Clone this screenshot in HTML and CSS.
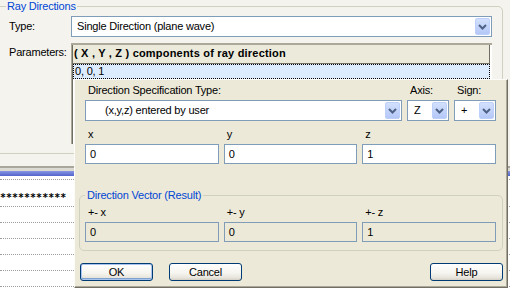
FILE: index.html
```html
<html><head>
  <meta charset="UTF-8">
  <meta name="viewport" content="width=device-width, initial-scale=1.0">
  <title>Ray Directions</title>
  <link rel="stylesheet" href="styles.css">
</head>
<body>
  <div class="panel">
    <fieldset class="group ray-group">
      <legend>Ray Directions</legend>
      <div class="field-row">
        <span class="field-label">Type:</span>
        <div class="combo">
          <span class="combo-text">Single Direction (plane wave)</span>
          <span class="combo-btn"><svg width="9" height="6" viewBox="0 0 9 6"><polyline points="1,1 4.5,4.5 8,1" fill="none" stroke="#4d6185" stroke-width="2"/></svg></span>
        </div>
      </div>
      <div class="field-row top">
        <span class="field-label">Parameters:</span>
        <div class="grid">
          <div class="grid-head">( X , Y , Z ) components of ray direction</div>
          <div class="grid-row selected">0, 0, 1</div>
        </div>
      </div>
    </fieldset>
    <div class="list">
      <div class="list-bar"></div>
      <div class="list-row first"></div>
      <div class="list-row stars">***********</div>
      <div class="list-row"></div>
      <div class="list-row"></div>
      <div class="list-row"></div>
      <div class="list-row"></div>
      <div class="list-row"></div>
    </div>
  </div>

  <div class="popup">
    <div class="spec-row">
      <div class="cell">
        <span class="lbl">Direction Specification Type:</span>
        <div class="combo">
          <span class="combo-text indent">(x,y,z) entered by user</span>
          <span class="combo-btn"><svg width="9" height="6" viewBox="0 0 9 6"><polyline points="1,1 4.5,4.5 8,1" fill="none" stroke="#4d6185" stroke-width="2"/></svg></span>
        </div>
      </div>
      <div class="cell">
        <span class="lbl">Axis:</span>
        <div class="combo">
          <span class="combo-text small">Z</span>
          <span class="combo-btn"><svg width="9" height="6" viewBox="0 0 9 6"><polyline points="1,1 4.5,4.5 8,1" fill="none" stroke="#4d6185" stroke-width="2"/></svg></span>
        </div>
      </div>
      <div class="cell">
        <span class="lbl">Sign:</span>
        <div class="combo">
          <span class="combo-text small">+</span>
          <span class="combo-btn"><svg width="9" height="6" viewBox="0 0 9 6"><polyline points="1,1 4.5,4.5 8,1" fill="none" stroke="#4d6185" stroke-width="2"/></svg></span>
        </div>
      </div>
    </div>

    <div class="xyz-row">
      <div class="cell">
        <span class="lbl">x</span>
        <div class="input">0</div>
      </div>
      <div class="cell">
        <span class="lbl">y</span>
        <div class="input">0</div>
      </div>
      <div class="cell">
        <span class="lbl">z</span>
        <div class="input">1</div>
      </div>
    </div>

    <fieldset class="group result-group">
      <legend>Direction Vector (Result)</legend>
      <div class="xyz-row inner">
        <div class="cell">
          <span class="lbl">+- x</span>
          <div class="input readonly">0</div>
        </div>
        <div class="cell">
          <span class="lbl">+- y</span>
          <div class="input readonly">0</div>
        </div>
        <div class="cell">
          <span class="lbl">+- z</span>
          <div class="input readonly">1</div>
        </div>
      </div>
    </fieldset>

    <div class="buttons">
      <button class="btn default">OK</button>
      <button class="btn">Cancel</button>
      <span class="spacer"></span>
      <button class="btn">Help</button>
    </div>
  </div>
</body>
</html>
```

FILE: styles.css
```css
body, html {
  margin: 0;
  padding: 0;
  width: 510px;
  height: 290px;
  overflow: hidden;
  background-color: #fff;
  font-family: 'Liberation Sans', Arial, sans-serif;
  font-size: 11px;
  letter-spacing: -0.2px;
  color: #000;
}
.panel {
  background-color: #f4f3ee;
  position: relative;
}
.group {
  margin: 0;
  min-width: 0;
  border: 1px solid #d0d0bf;
  border-radius: 5px;
}
.group legend {
  color: #0046d5;
  line-height: 12px;
  padding: 0 1px;
}
.ray-group {
  margin-left: -5px;
  width: 508px;
  box-sizing: border-box;
  padding: 4px 10px 9px 13px;
}
.ray-group legend {
  margin-left: -3px;
}
.field-row {
  display: flex;
  align-items: center;
}
.field-row.top {
  align-items: flex-start;
  margin-top: 6px;
}
.field-label {
  width: 62px;
  flex: none;
  line-height: 13px;
}
.field-row.top .field-label {
  padding-top: 3px;
}
.combo {
  flex: 1;
  display: flex;
  align-items: stretch;
  height: 21px;
  box-sizing: border-box;
  border: 1px solid #7f9db9;
  background-color: #fff;
  padding: 1px;
}
.combo-text {
  flex: 1;
  line-height: 17px;
  padding-left: 4px;
  white-space: nowrap;
  overflow: hidden;
}
.combo-text.indent {
  padding-left: 18px;
}
.combo-text.small {
  padding-left: 5px;
}
.combo-btn {
  width: 15px;
  flex: none;
  box-sizing: border-box;
  border: 1px solid #bdd0fb;
  border-radius: 2px;
  background: linear-gradient(#d3e0fd, #b4c8f7);
  display: flex;
  align-items: center;
  justify-content: center;
}
.grid {
  flex: 1;
  height: 101px;
  box-sizing: border-box;
  background-color: #fff;
  border-top: 2px solid #aca899;
  border-left: 1px solid #aca899;
  box-shadow: inset 1px 0 #716f64;
  padding-left: 1px;
}
.grid-head {
  margin-right: 2px;
  height: 19px;
  box-sizing: border-box;
  line-height: 17px;
  padding-left: 1px;
  font-weight: bold;
  letter-spacing: 0.2px;
  background-color: #ebeadb;
  border-bottom: 1px solid #716f64;
  border-right: 1px solid #716f64;
}
.grid-row {
  margin-right: 2px;
  height: 15px;
  line-height: 15px;
  padding-left: 2px;
}
.grid-row.selected {
  background-color: #dcebfd;
  outline: 1px dotted #000;
  outline-offset: -1px;
}
.list {
  margin-top: 12px;
  background-color: #fff;
}
.list-bar {
  height: 10px;
  background: linear-gradient(#a9a79c 0, #a9a79c 2px, #dad9d2 2px, #dad9d2 5px, #8696e2 5px, #5464cc 10px);
}
.list-row {
  height: 15px;
  border-bottom: 1px dotted #9c9c9c;
}
.list-row.first {
  height: 3px;
}
.list-row.stars {
  height: 16px;
  padding-top: 10px;
  line-height: 16px;
  font-family: 'DejaVu Sans Mono', monospace;
  font-weight: bold;
  font-size: 10px;
  letter-spacing: 0;
  white-space: nowrap;
}
.popup {
  position: absolute;
  left: 74px;
  top: 79px;
  width: 434px;
  height: 209px;
  box-sizing: border-box;
  background-color: #ece9d8;
  border: 1px solid #fbfbf8;
  border-right-color: #716f64;
  border-bottom-color: #716f64;
  box-shadow: inset -1px -1px #aca899;
  padding: 4px 4px 6px 4px;
}
.spec-row {
  display: grid;
  grid-template-columns: 1fr 42px 42px;
  column-gap: 5px;
  margin: 0 7px 0 6px;
}
.cell {
  display: flex;
  flex-direction: column;
  min-width: 0;
}
.lbl {
  line-height: 13px;
  padding-left: 3px;
  margin-bottom: 3px;
  white-space: nowrap;
}
.xyz-row {
  display: grid;
  grid-template-columns: 1fr 1fr 1fr;
  column-gap: 5px;
  margin: 7px 7px 0 6px;
}
.xyz-row.inner {
  margin: 0;
}
.input {
  height: 20px;
  box-sizing: border-box;
  border: 1px solid #7f9db9;
  background-color: #fff;
  line-height: 18px;
  padding-left: 4px;
}
.input.readonly {
  background-color: #ece9d8;
}
.result-group {
  margin-top: 25px;
  padding: 5px 6px 8px 5px;
}
.result-group legend {
  padding: 0 2px;
}
.buttons {
  display: flex;
  margin: 12px 0 0 1px;
}
.spacer {
  flex: 1;
}
.btn {
  width: 73px;
  height: 18px;
  margin-right: 16px;
  padding: 0;
  font-family: inherit;
  font-size: 11px;
  letter-spacing: -0.2px;
  color: #000;
  border: 1px solid #003c74;
  border-radius: 3px;
  background: linear-gradient(#fff 0%, #f6f5f0 55%, #e7e5dc 85%, #d6d0c5 100%);
}
.btn:last-child {
  margin-right: 0;
}
.btn.default {
  box-shadow: inset 0 0 0 1px #a9c3ee, inset 0 -1px 0 1px #7da2ce;
}
```
